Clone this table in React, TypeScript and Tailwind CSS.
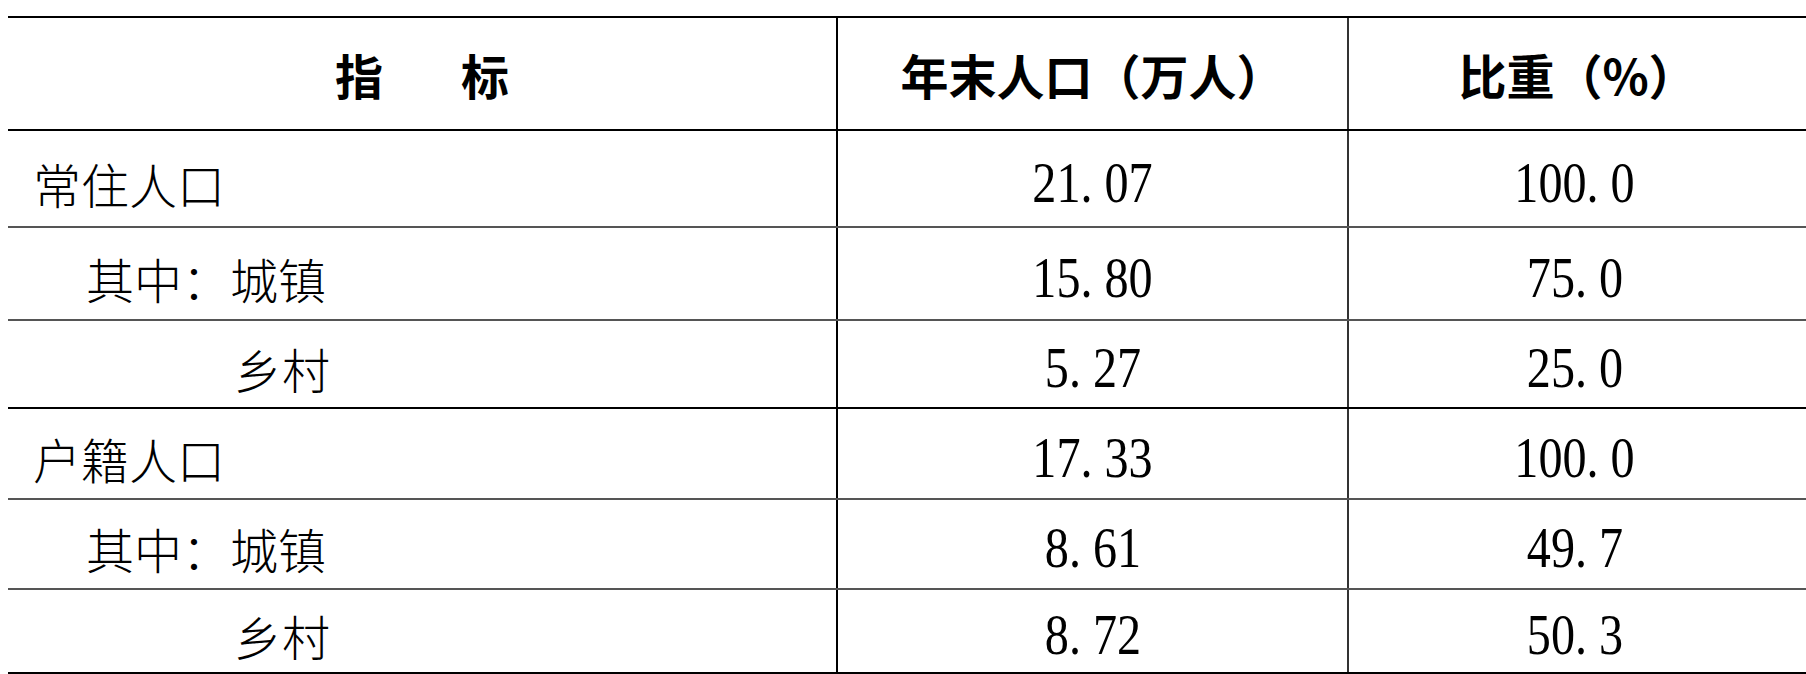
import React from "react";

const CJK = { fontFamily: '"Noto Sans CJK SC", "Noto Sans", sans-serif' };

type Row = { label: string; indent: number; a: string; b: string; h: string; border: string };

const rows: Row[] = [
  { label: "常住人口", indent: 0, a: "21.07", b: "100.0", h: "h-[97px]", border: "border-b-2 border-[#555]" },
  { label: "其中：城镇", indent: 1, a: "15.80", b: "75.0", h: "h-[93px]", border: "border-b-2 border-[#555]" },
  { label: "乡村", indent: 4, a: "5.27", b: "25.0", h: "h-[88px]", border: "border-b-2 border-black" },
  { label: "户籍人口", indent: 0, a: "17.33", b: "100.0", h: "h-[91px]", border: "border-b-2 border-[#555]" },
  { label: "其中：城镇", indent: 1, a: "8.61", b: "49.7", h: "h-[90px]", border: "border-b-2 border-[#555]" },
  { label: "乡村", indent: 4, a: "8.72", b: "50.3", h: "h-[84px]", border: "border-b-2 border-black" },
];

function Num({ v }: { v: string }) {
  const [i, f] = v.split(".");
  return (
    <span
      className="inline-block scale-x-[0.83] text-[58px] leading-none text-black"
      style={{ fontFamily: '"Liberation Serif", "Times New Roman", serif' }}
    >
      {i}
      <span className="inline-block w-[29px] text-left">.</span>
      {f}
    </span>
  );
}

function indentClass(n: number) {
  if (n === 0) return "pl-[25px]";
  if (n === 1) return "pl-[78px]";
  return "pl-[226px]";
}

export default function App() {
  return (
    <div className="w-[1806px] h-[674px] bg-white overflow-hidden">
      <div className="mt-[16px] ml-[8px] w-[1798px] border-t-2 border-black">
        {/* header */}
        <div className="flex h-[113px] border-b-2 border-black font-bold text-[48px] leading-none text-black" style={CJK}>
          <div className="w-[830px] border-r-2 border-black flex items-center justify-center">
            <div className="flex gap-[78px]">
              <span>指</span>
              <span>标</span>
            </div>
          </div>
          <div className="w-[511px] border-r-2 border-[#333] flex items-center justify-center">
            年末人口（万人）
          </div>
          <div className="flex-1 flex items-center justify-center">比重（%）</div>
        </div>
        {rows.map((r, idx) => (
          <div key={idx} className={`flex ${r.h} ${r.border}`}>
            <div
              className={`w-[830px] border-r-2 border-black flex items-center pt-[8px] ${indentClass(r.indent)} text-[48px] font-light leading-none text-black`}
              style={CJK}
            >
              {r.label}
            </div>
            <div className="w-[511px] border-r-2 border-[#333] flex items-center justify-center pt-[8px]">
              <Num v={r.a} />
            </div>
            <div className="flex-1 flex items-center justify-center pt-[8px] pr-[6px]">
              <Num v={r.b} />
            </div>
          </div>
        ))}
      </div>
    </div>
  );
}
